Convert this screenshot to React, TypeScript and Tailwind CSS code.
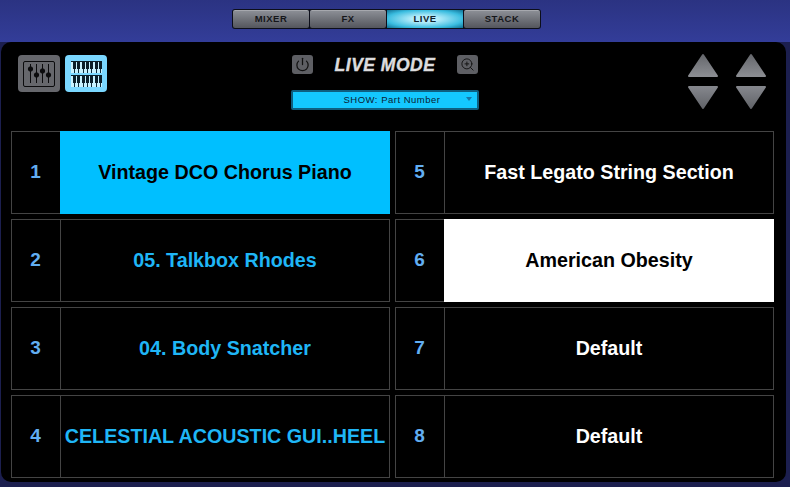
import { Power, ZoomIn } from 'lucide-react'

const tabs = ['MIXER', 'FX', 'LIVE', 'STACK']

const slots = [
  { n: 1, name: 'Vintage DCO Chorus Piano', kind: 'activeBlue' },
  { n: 5, name: 'Fast Legato String Section', kind: 'white' },
  { n: 2, name: '05. Talkbox Rhodes', kind: 'blue' },
  { n: 6, name: 'American Obesity', kind: 'activeWhite' },
  { n: 3, name: '04. Body Snatcher', kind: 'blue' },
  { n: 7, name: 'Default', kind: 'white' },
  { n: 4, name: 'CELESTIAL ACOUSTIC GUI..HEEL', kind: 'blue' },
  { n: 8, name: 'Default', kind: 'white' },
]

function SlidersIcon() {
  return (
    <svg width="32" height="26" viewBox="0 0 32 26" fill="none" stroke="#0b0b0d">
      <rect x="0.5" y="0.5" width="31" height="25" rx="1.5" />
      <path d="M7.5 3v19M13.5 3v19M19.5 3v19M25.5 3v19" />
      <circle cx="7.5" cy="8" r="2.2" fill="#0b0b0d" />
      <circle cx="13.5" cy="14" r="2.2" fill="#0b0b0d" />
      <circle cx="19.5" cy="10" r="2.2" fill="#0b0b0d" />
      <circle cx="25.5" cy="14" r="2.2" fill="#0b0b0d" />
    </svg>
  )
}

function KeysRow() {
  return (
    <g>
      <rect width="31" height="12" fill="#c9f2ff" />
      <path d="M3.5 0v12M7.5 0v12M12.5 0v12M16.5 0v12M20.5 0v12M25.5 0v12M29.5 0v12" stroke="#0f2b3a" />
      <path d="M2 0h3v8H2zM6 0h3v8H6zM11 0h3v8h-3zM15 0h3v8h-3zM19 0h3v8h-3zM24 0h3v8h-3zM28 0h3v8h-3z" fill="#0b1f2a" />
      <path d="M0 0h31v1H0z" fill="#0b1f2a" />
    </g>
  )
}

function KeysIcon() {
  return (
    <svg width="31" height="26" viewBox="0 0 31 26">
      <KeysRow />
      <g transform="translate(0 14)">
        <KeysRow />
      </g>
    </svg>
  )
}

function Arrow({ down }: { down?: boolean }) {
  return (
    <svg width="32" height="25" viewBox="0 0 32 25">
      <defs>
        <linearGradient id={down ? 'arrow-d' : 'arrow-u'} x1="0" y1="0" x2="0" y2="1">
          <stop offset="0" stopColor={down ? '#84868c' : '#66686d'} />
          <stop offset="1" stopColor={down ? '#626469' : '#8b8d92'} />
        </linearGradient>
      </defs>
      <path
        d={down ? 'M2 2h28L16 23z' : 'M16 2L30 23H2z'}
        fill={`url(#${down ? 'arrow-d' : 'arrow-u'})`}
        stroke={`url(#${down ? 'arrow-d' : 'arrow-u'})`}
        strokeWidth="2"
        strokeLinejoin="round"
      />
    </svg>
  )
}

function Slot({ n, name, kind }: { n: number; name: string; kind: string }) {
  const nameClass =
    kind === 'activeBlue'
      ? 'bg-[#00bfff] text-black -my-px -mr-px'
      : kind === 'activeWhite'
        ? 'bg-white text-black -my-px -mr-px'
        : kind === 'blue'
          ? 'text-[#1fb6f6] border-l border-[#444]'
          : 'text-white border-l border-[#444]'
  return (
    <div className="flex h-[83px] border border-[#444] bg-black">
      <div className="flex w-[47px] shrink-0 items-center justify-center pb-px text-[19px] font-bold text-[#62aef2]">{n}</div>
      <div className="w-px shrink-0" />
      <div className={`flex min-w-0 flex-1 items-center justify-center whitespace-nowrap text-[19.7px] font-bold ${nameClass}`}>
        {name}
      </div>
    </div>
  )
}

export default function App() {
  return (
    <div className="h-[487px] w-[790px] overflow-hidden bg-[#1c1f4f] font-['Liberation_Sans',sans-serif]">
      <div className="h-[42px] bg-gradient-to-b from-[#2b3382] to-[#333d99] pl-[232px] pt-[9px]">
        <div className="flex h-[20px] w-[309px] gap-px rounded-[3px] bg-[#0c0e1a] p-px">
          {tabs.map((t) =>
            t === 'LIVE' ? (
              <div
                key={t}
                className="flex w-[76px] items-center justify-center bg-[radial-gradient(ellipse_at_center,#b4ecfa_25%,#3bbde0_70%,#0f6f93_100%)] pt-px text-[9.5px] font-bold tracking-[0.5px] text-[#10222c]"
              >
                {t}
              </div>
            ) : (
              <div
                key={t}
                className="flex w-[76px] items-center justify-center rounded-[2px] border-t border-[#a6a8ae] bg-gradient-to-b from-[#8b8e95] to-[#54565d] text-[9.5px] font-bold tracking-[0.5px] text-[#15161a]"
              >
                {t}
              </div>
            ),
          )}
        </div>
      </div>

      <div className="ml-px h-[440px] w-[785px] rounded-[10px] bg-black px-[10px] pt-[13px]">
        <div className="flex h-[76px] items-start">
          <div className="flex w-[280px] gap-[5px] pl-[7px]">
            <div className="flex h-[37px] w-[42px] items-center justify-center rounded-[4px] bg-[#66676c]">
              <SlidersIcon />
            </div>
            <div className="flex h-[37px] w-[42px] items-center justify-center rounded-[4px] bg-[#7ad7ff]">
              <KeysIcon />
            </div>
          </div>

          <div className="flex w-[188px] flex-col gap-[16px]">
            <div className="flex h-[19px] items-center justify-between px-px">
              <div className="flex h-[19px] w-[21px] items-center justify-center rounded-[3px] bg-[#5e5f64]">
                <Power size={15} strokeWidth={2} color="#111" />
              </div>
              <span className="pt-[2px] text-[17.5px] font-bold italic tracking-[0.5px] text-[#dcdcde] [-webkit-text-stroke:0.4px_#dcdcde]">
                LIVE MODE
              </span>
              <div className="flex h-[19px] w-[21px] items-center justify-center rounded-[3px] bg-[#5e5f64]">
                <ZoomIn size={15} strokeWidth={1.5} color="#111" />
              </div>
            </div>
            <div className="relative flex h-[20px] items-center justify-center rounded-[2px] border-2 border-[#0e5f80] bg-[#14c8ff] pl-[14px] text-[9.5px] tracking-[0.5px] text-[#0a2233]">
              SHOW: Part Number
              <span className="absolute right-[5px] top-[5px] h-0 w-0 border-x-[3px] border-t-[4px] border-x-transparent border-t-[#1677a8]" />
            </div>
          </div>

          <div className="-mt-[2px] flex flex-1 justify-end gap-[16px] pr-[9px]">
            <div className="flex flex-col gap-[7px]">
              <Arrow />
              <Arrow down />
            </div>
            <div className="flex flex-col gap-[7px]">
              <Arrow />
              <Arrow down />
            </div>
          </div>
        </div>

        <div className="grid grid-cols-[379px_379px] gap-[5px]">
          {slots.map((s) => (
            <Slot key={s.n} {...s} />
          ))}
        </div>
      </div>
    </div>
  )
}
